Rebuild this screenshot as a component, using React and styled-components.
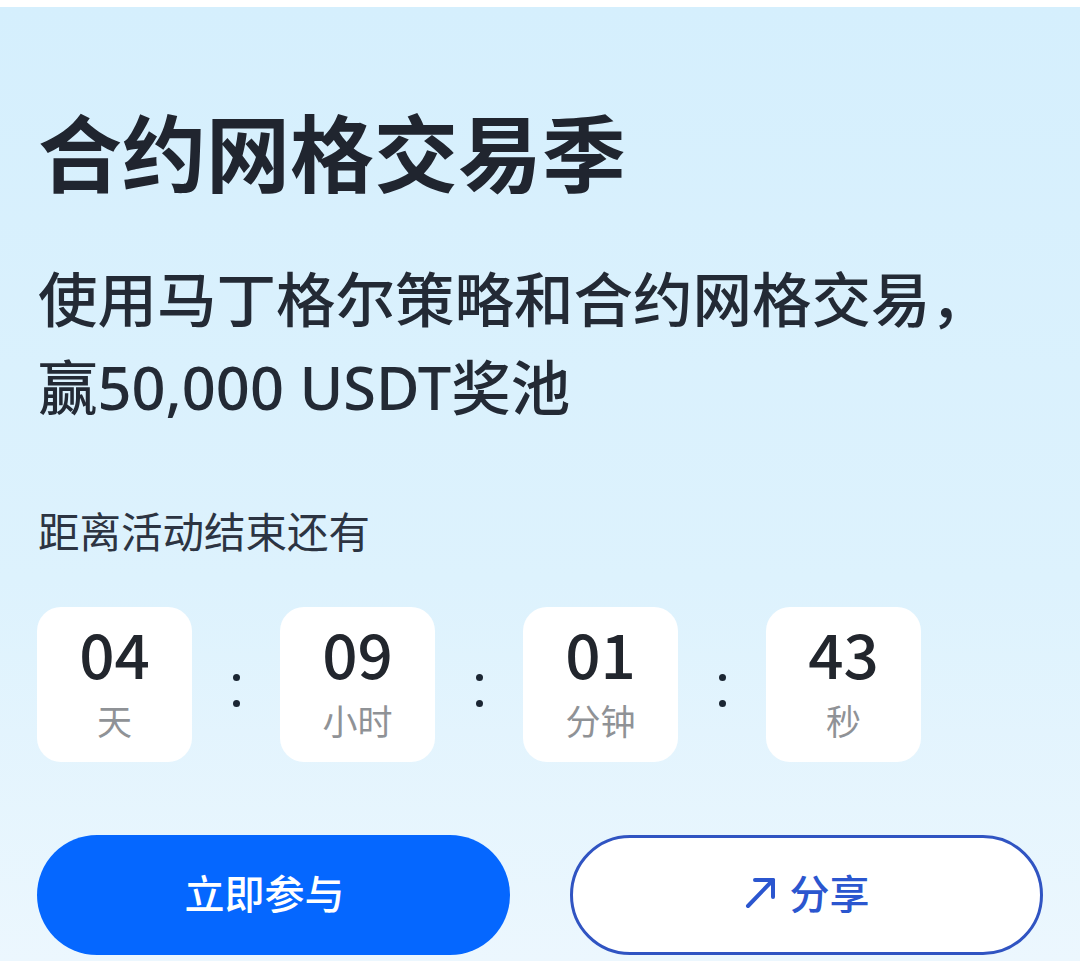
import React from "react";
import styled, { createGlobalStyle } from "styled-components";

const Global = createGlobalStyle`
  html, body { margin: 0; padding: 0; background: #ffffff; }
  body { font-family: "Noto Sans CJK SC", "Noto Sans", sans-serif; }
  * { box-sizing: border-box; }
`;

const Page = styled.main`
  margin-top: 7px;
  min-height: 954px;
  background: linear-gradient(180deg, #d5effd 0%, #ddf2fd 60%, #ecf7fe 100%);
  padding: 93px 37px 0 37px;
  display: flex;
  flex-direction: column;
`;

const Title = styled.h1`
  margin: 0 0 0 1px;
  font-size: 84px;
  line-height: 100px;
  font-weight: 700;
  color: #20252f;
  letter-spacing: 0;
`;

const Subtitle = styled.p`
  margin: 55px 0 0 1px;
  font-family: "Noto Sans", "Noto Sans CJK SC", sans-serif;
  font-size: 59.5px;
  line-height: 88px;
  font-weight: 500;
  color: #232a35;
  width: 1000px;
`;

const Caption = styled.p`
  margin: 74px 0 0 1px;
  font-size: 41.5px;
  line-height: 50px;
  font-weight: 400;
  color: #2c3442;
`;

const Countdown = styled.div`
  margin-top: 52px;
  display: flex;
  align-items: stretch;
`;

const TimeBox = styled.div`
  width: 155px;
  height: 155px;
  border-radius: 24px;
  background: #ffffff;
  display: flex;
  flex-direction: column;
  align-items: center;
  padding-top: 10px;
`;

const Num = styled.span`
  font-size: 62px;
  line-height: 70px;
  font-weight: 500;
  color: #22262d;
`;

const Unit = styled.span`
  margin-top: 13px;
  font-size: 35px;
  line-height: 40px;
  color: #8f9296;
`;

const Colon = styled.div`
  width: 88px;
  display: flex;
  flex-direction: column;
  align-items: center;
  justify-content: center;
  gap: 19px;
  padding-top: 12px;
  &::before, &::after {
    content: "";
    width: 7px;
    height: 7px;
    border-radius: 50%;
    background: #1b2633;
  }
`;

const Actions = styled.div`
  margin-top: 73px;
  display: flex;
  gap: 60px;
`;

const Button = styled.button`
  width: 473px;
  height: 120px;
  border-radius: 60px;
  font-family: "Noto Sans CJK SC", "Noto Sans", sans-serif;
  font-size: 40px;
  font-weight: 500;
  display: flex;
  align-items: center;
  justify-content: center;
  gap: 12px;
  cursor: pointer;
  padding: 0 0 6px 0;
  ${(p) =>
    p.$primary
      ? `background: #0567ff; color: #ffffff; border: none; padding-right: 18px;`
      : `background: #ffffff; color: #2b56cf; border: 3px solid #3054c2;`}
`;

const Arrow = () => (
  <svg width="34" height="34" viewBox="0 0 34 34" fill="none" stroke="#2b56cf" strokeWidth="4" strokeLinecap="round" strokeLinejoin="round">
    <path d="M4 31 L29 5" />
    <path d="M11 5 H29 V22" />
  </svg>
);

const units = [
  ["04", "天"],
  ["09", "小时"],
  ["01", "分钟"],
  ["43", "秒"],
];

export default function App() {
  return (
    <>
      <Global />
      <Page>
        <Title>合约网格交易季</Title>
        <Subtitle>
          使用马丁格尔策略和合约网格交易，
          <br />
          赢50,000 USDT奖池
        </Subtitle>
        <Caption>距离活动结束还有</Caption>
        <Countdown>
          {units.map(([n, u], i) => (
            <React.Fragment key={u}>
              {i > 0 && <Colon />}
              <TimeBox>
                <Num>{n}</Num>
                <Unit>{u}</Unit>
              </TimeBox>
            </React.Fragment>
          ))}
        </Countdown>
        <Actions>
          <Button $primary>立即参与</Button>
          <Button>
            <Arrow />
            分享
          </Button>
        </Actions>
      </Page>
    </>
  );
}
